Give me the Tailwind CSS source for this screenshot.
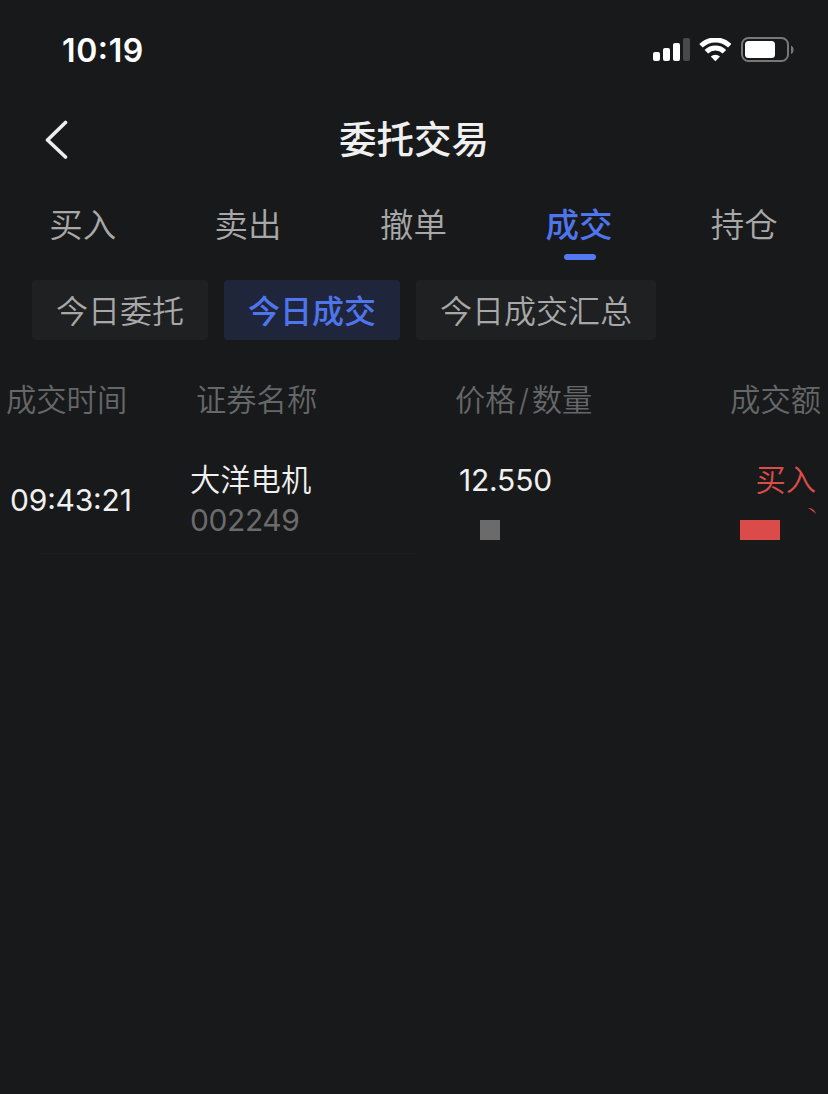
<!DOCTYPE html>
<html lang="zh-CN">
<head>
  <meta charset="UTF-8">
  <meta name="viewport" content="width=device-width, initial-scale=1.0">
  <title>委托交易</title>
  <script src="https://cdn.jsdelivr.net/npm/@tailwindcss/browser@4"></script>
</head>
<body class="h-screen overflow-hidden bg-[#18191b] text-[#f0f0f0] font-['Inter','Noto_Sans_CJK_SC',sans-serif]">

  <!-- Status bar -->
  <header class="flex h-[100px] items-center justify-between pl-[62px] pr-[34px] text-white">
    <span class="pt-px text-[32px] font-[560] leading-none tracking-[0.6px]">10<span class="inline-block -translate-y-[3px]">:</span>19</span>
    <div class="flex items-center gap-[9px]">
      <svg class="h-6 w-[38px]" viewBox="0 0 38 24" fill="#fff">
        <rect x="1" y="14" width="7" height="9" rx="2"/>
        <rect x="11" y="10" width="7" height="13" rx="2"/>
        <rect x="21" y="5" width="7" height="18" rx="2"/>
        <rect x="31" y="0" width="7" height="23" rx="2" fill="#48494b"/>
      </svg>
      <svg class="h-6 w-8" viewBox="0 0 32 24" fill="none" stroke="#fff" stroke-width="5">
        <path d="M2 7.800a20.500 20.500 0 0 1 28.800 0"/>
        <path d="M7.400 13.800a12.800 12.800 0 0 1 18 0"/>
        <path d="M16.400 23.200l-4.600-4.600a6.600 6.600 0 0 1 9.200 0z" fill="#fff" stroke="none"/>
      </svg>
      <svg class="h-[26px] w-[54px]" viewBox="0 0 54 26">
        <rect x="2" y="1" width="46" height="23" rx="6.5" fill="none" stroke="#77787a" stroke-width="2"/>
        <rect x="5" y="4" width="30" height="17" rx="3.5" fill="#fff"/>
        <path d="M51 8.500c3.500 1.200 3.500 7.400 0 8.600z" fill="#77787a"/>
      </svg>
    </div>
  </header>

  <!-- Title bar -->
  <div class="grid h-20 grid-cols-[1fr_auto_1fr] items-center pl-[44px]">
    <svg class="h-10 w-6" viewBox="0 0 24 40" fill="none" stroke="#ededed" stroke-width="3.6" stroke-linecap="round" stroke-linejoin="round">
      <path d="M21.500 2.500L3.500 20L21.500 37"/>
    </svg>
    <h1 class="mr-[44px] text-[37.500px] font-medium leading-none">委托交易</h1>
  </div>

  <!-- Main tabs -->
  <nav class="grid h-[100px] w-[827px] grid-cols-5 text-center text-[33.500px] font-[350] leading-[90px] text-[#a8a8a8]">
    <a>买入</a>
    <a>卖出</a>
    <a>撤单</a>
    <a class="relative font-medium text-[#4f75ec]">成交
      <span class="absolute left-1/2 top-[74px] ml-px h-1.5 w-8 -translate-x-1/2 rounded-full bg-[#5379ef]"></span>
    </a>
    <a>持仓</a>
  </nav>

  <!-- Sub tabs -->
  <div class="flex h-[60px] gap-4 pl-8 text-[32px] font-[350] leading-[63px] text-[#a8a8a8]">
    <span class="h-[60px] rounded bg-[#1f2022] px-6">今日委托</span>
    <span class="h-[60px] rounded bg-[#1f263c] px-6 font-medium text-[#4f75ec]">今日成交</span>
    <span class="h-[60px] rounded bg-[#1f2022] px-6">今日成交汇总</span>
  </div>

  <!-- Trades -->
  <main class="text-[30.300px] font-[350]">
    <div class="grid h-[120px] grid-cols-[190px_259px_1fr_auto] pl-1.5 pr-[7px] leading-[120px] text-[#666768]">
      <span>成交时间</span>
      <span>证券名称</span>
      <span>价格<span class="mx-[2.800px]">/</span>数量</span>
      <span>成交额</span>
    </div>
    <div class="grid h-[94px] grid-cols-[180px_269px_1fr_auto] pl-2.5 pr-3 leading-10">
      <span class="mt-5 text-[30px] font-normal tracking-[-0.200px]">09<span class="inline-block -translate-y-0.5">:</span>43<span class="inline-block -translate-y-0.5">:</span>21</span>
      <div>
        <p>大洋电机</p>
        <p class="text-[30px] font-normal tracking-[-0.400px] text-[#6b6b6c]">002249</p>
      </div>
      <div>
        <p class="text-[30px] font-normal tracking-[-0.200px]">12.550</p>
        <div class="ml-[21px] mt-5 size-5 bg-[#6b6b6b]"></div>
      </div>
      <div class="relative flex flex-col items-end text-[#dc4c49]">
        <p>买入</p>
        <div class="mr-9 mt-5 h-5 w-10 bg-[#db4b49]"></div>
        <svg class="absolute right-0 top-[47px] h-2 w-2" viewBox="0 0 8 8" fill="currentColor"><path d="M0 1c3.500-0.500 7 2.500 8 6C5.500 4.800 3 2.500 0 1z"/></svg>
      </div>
    </div>
    <div class="-mt-px ml-10 h-px w-[376px] bg-[#1c1c1f]"></div>
  </main>
</body>
</html>
